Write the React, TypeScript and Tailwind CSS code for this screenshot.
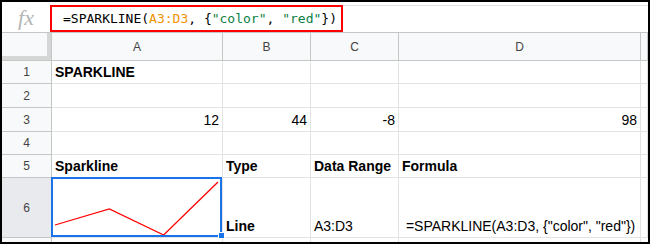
import React from 'react';

const sans = { fontFamily: '"Liberation Sans", Arial, sans-serif' };

const colHeads = ['A', 'B', 'C', 'D', ''];

function Head({ label, active }: { label: string; active?: boolean }) {
  return (
    <div
      className={`flex items-center justify-center border-r border-b border-[#c4c7c5] text-[12px] text-[#444] ${
        active ? 'bg-[#e8eaed]' : 'bg-[#f8f9fa]'
      }`}
    >
      {label}
    </div>
  );
}

function Cell({ children, className = '' }: { children?: React.ReactNode; className?: string }) {
  return (
    <div
      className={`relative flex items-end whitespace-nowrap border-r border-b border-[#e2e3e3] px-[3px] pb-[3px] text-[14px] leading-[16px] text-black ${className}`}
    >
      {children}
    </div>
  );
}

function Sparkline() {
  const data = [12, 44, -8, 98];
  const w = 170;
  const h = 59;
  const min = Math.min(...data);
  const max = Math.max(...data);
  const pts = data
    .map((v, i) => {
      const x = 3 + (i * (w - 7)) / (data.length - 1);
      const y = 4 + (1 - (v - min) / (max - min)) * 53;
      return `${x},${y}`;
    })
    .join(' ');
  return (
    <svg className="absolute left-0 top-0" width={w} height={h}>
      <polyline points={pts} fill="none" stroke="#ff0000" strokeWidth="1.3" />
    </svg>
  );
}

export default function App() {
  return (
    <div className="h-[244px] w-[650px] overflow-hidden border-2 border-black bg-white" style={sans}>
      {/* formula bar */}
      <div className="flex h-[31px] border-b border-[#c4c7c5]">
        <div className="flex w-[48px] items-center justify-center">
          <span
            className="text-[22px] italic text-[#b5b5b5]"
            style={{ fontFamily: '"Liberation Serif", "Times New Roman", serif' }}
          >
            fx
          </span>
        </div>
        <div className="mt-[3px] flex h-[27px] w-[293px] items-center border-2 border-[#ff0000] pl-[11px]">
          <span
            className="whitespace-pre text-[13px] text-black"
            style={{ fontFamily: '"DejaVu Sans Mono", "Liberation Mono", monospace' }}
          >
            =SPARKLINE(<span className="text-[#f09300]">A3:D3</span>, {'{'}
            <span className="text-[#0b8043]">"color"</span>, <span className="text-[#0b8043]">"red"</span>
            {'})'}
          </span>
        </div>
        <div className="mt-[3px] flex-1 border-t border-[#e3e3e3]" />
      </div>

      {/* sheet grid */}
      <div className="grid grid-cols-[50px_171px_88px_88px_242px_7px] grid-rows-[28px_23px_24px_24px_23px_23px_60px_4px]">
        <div className="border-r border-b border-[#c4c7c5] bg-[#f8f9fa]">
          <div className="h-full w-full border-r-[4px] border-b-[4px] border-[#d6d6d6]" />
        </div>
        {colHeads.map((c, i) => (
          <Head key={i} label={c} />
        ))}

        <Head label="1" />
        <Cell className="font-bold">SPARKLINE</Cell>
        <Cell />
        <Cell />
        <Cell />
        <Cell />

        <Head label="2" />
        <Cell />
        <Cell />
        <Cell />
        <Cell />
        <Cell />

        <Head label="3" />
        <Cell className="justify-end">12</Cell>
        <Cell className="justify-end">44</Cell>
        <Cell className="justify-end">-8</Cell>
        <Cell className="justify-end">98</Cell>
        <Cell />

        <Head label="4" />
        <Cell />
        <Cell />
        <Cell />
        <Cell />
        <Cell />

        <Head label="5" />
        <Cell className="font-bold">Sparkline</Cell>
        <Cell className="font-bold">Type</Cell>
        <Cell className="font-bold">Data Range</Cell>
        <Cell className="font-bold">Formula</Cell>
        <Cell />

        <Head label="6" active />
        <Cell className="z-10">
          <Sparkline />
          <div className="absolute -left-[1px] -top-[1px] bottom-0 right-0 border-2 border-[#1a73e8]" />
          <div className="absolute -bottom-[2px] -right-[3px] h-[7px] w-[7px] border border-white bg-[#1a73e8]" />
        </Cell>
        <Cell className="font-bold">Line</Cell>
        <Cell>A3:D3</Cell>
        <Cell>
          <span className="whitespace-pre"> =SPARKLINE(A3:D3, {'{'}"color", "red"{'})'}</span>
        </Cell>
        <Cell />

        <div className="border-r border-[#c4c7c5] bg-[#f8f9fa]" />
        <div className="border-r border-[#e2e3e3]" />
        <div className="border-r border-[#e2e3e3]" />
        <div className="border-r border-[#e2e3e3]" />
        <div className="border-r border-[#e2e3e3]" />
        <div />
      </div>
    </div>
  );
}
